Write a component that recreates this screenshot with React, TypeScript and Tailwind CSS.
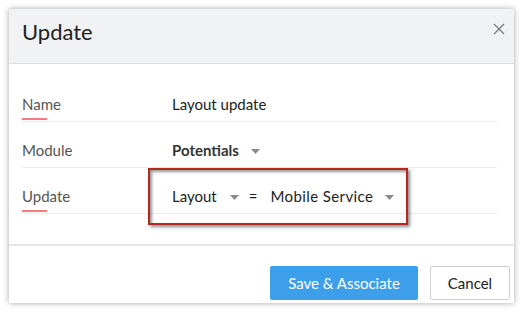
import React from "react";

function Caret({ ml = 10 }: { ml?: number }) {
  return (
    <svg width="9" height="5" viewBox="0 0 9 5" className={ml === 12 ? "ml-[12px] mt-[2px]" : "ml-[13px] mt-[2px]"}>
      <path d="M0 0 L9 0 L4.5 5 Z" fill="#8a8a8a" />
    </svg>
  );
}

function Row({ label, required, children }: { label: string; required?: boolean; children: React.ReactNode }) {
  return (
    <div className="relative flex h-[46px] items-center border-b border-[#ececec] pt-[12px]">
      <div className="w-[150px] text-[15px] text-[#555]">{label}</div>
      <div className="flex items-center text-[15px] text-[#222]">{children}</div>
      {required && <div className="absolute bottom-[1px] left-0 h-[2px] w-[25px] bg-[#f47c7c]" />}
    </div>
  );
}

export default function App() {
  return (
    <div className="h-[313px] w-[523px] bg-white pl-[9px] pt-[9px]" style={{ fontFamily: "Lato, 'Open Sans', sans-serif" }}>
      <div className="relative flex h-[294px] w-[505px] flex-col bg-white shadow-[0_0_6px_rgba(0,0,0,0.35)]">
        <div className="flex h-[55px] shrink-0 items-start justify-between border-b border-[#dcdcdc] bg-[#f1f2f4] pl-[13px] pr-[9px]">
          <div className="mt-[10px] text-[22px] leading-[26px] text-[#222]">Update</div>
          <svg width="12" height="12" viewBox="0 0 12 12" className="mt-[14px]">
            <path d="M1 1 L11 11 M11 1 L1 11" stroke="#777" strokeWidth="1.2" />
          </svg>
        </div>
        <div className="pl-[13px] pr-[17px] pt-[12px]">
          <Row label="Name" required>Layout update</Row>
          <Row label="Module">
            <span className="font-bold text-[#333]">Potentials</span>
            <Caret ml={12} />
          </Row>
          <Row label="Update" required>
            <span>Layout</span>
            <Caret ml={13} />
            <span className="ml-[10px] mr-[13px]">=</span>
            <span className="tracking-[0.4px]">Mobile Service</span>
            <Caret ml={12} />
          </Row>
        </div>
        <div className="mt-[30px] border-t-2 border-[#e6e6e6]" />
        <div className="flex justify-end gap-[12px] pr-[4px] pt-[20px]">
          <button className="h-[34px] w-[148px] rounded-[2px] bg-[#3d9fe9] text-[15px] text-white">Save &amp; Associate</button>
          <button className="h-[34px] w-[80px] rounded-[2px] border border-[#cfcfcf] bg-white text-[15px] text-[#222]">Cancel</button>
        </div>
        <div className="pointer-events-none absolute left-[139px] top-[159px] h-[57px] w-[260px] border-2 border-[#b3291f] shadow-[2px_2px_3px_rgba(0,0,0,0.45),inset_2px_2px_3px_rgba(0,0,0,0.4)]" />
      </div>
    </div>
  );
}
